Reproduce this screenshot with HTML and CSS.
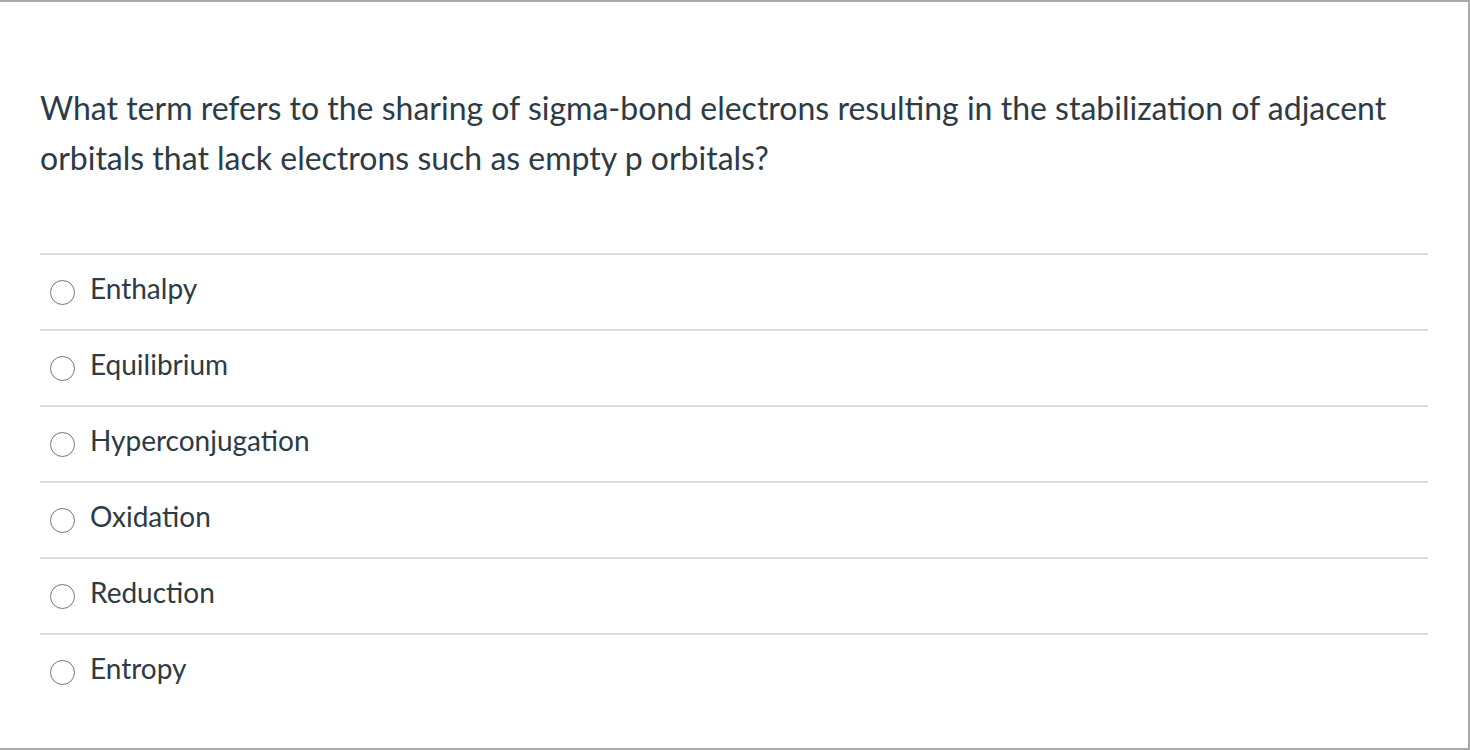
FILE: index.html
```html
<!DOCTYPE html>
<html lang="en">
<head>
<meta charset="utf-8">
<title>Quiz question</title>
<link rel="stylesheet" href="styles.css">
</head>
<body>
<div class="frame">
  <div class="question">
    <p class="question-text">What term refers to the sharing of sigma-bond electrons resulting in the stabilization of adjacent orbitals that lack electrons such as empty p orbitals?</p>
    <div class="answers">
      <label class="answer"><span class="radio"></span><span class="answer-text">Enthalpy</span></label>
      <label class="answer"><span class="radio"></span><span class="answer-text">Equilibrium</span></label>
      <label class="answer"><span class="radio"></span><span class="answer-text">Hyperconjugation</span></label>
      <label class="answer"><span class="radio"></span><span class="answer-text">Oxidation</span></label>
      <label class="answer"><span class="radio"></span><span class="answer-text">Reduction</span></label>
      <label class="answer"><span class="radio"></span><span class="answer-text">Entropy</span></label>
    </div>
  </div>
</div>
</body>
</html>
```

FILE: styles.css
```css
* {
  box-sizing: border-box;
}

html, body {
  margin: 0;
  padding: 0;
  background: #ffffff;
}

body {
  font-family: Lato, "Liberation Sans", sans-serif;
  color: #2d3b45;
}

.frame {
  width: 1470px;
  height: 750px;
  border-top: 2px solid #a9a9a9;
  border-right: 2px solid #a9a9a9;
  border-bottom: 2px solid #a9a9a9;
  background: #ffffff;
}

.question {
  padding: 81px 40px 0 40px;
}

.question-text {
  margin: 0;
  font-size: 32px;
  line-height: 50px;
}

.answers {
  margin-top: 70px;
  display: flex;
  flex-direction: column;
}

.answer {
  display: flex;
  align-items: center;
  height: 76px;
  border-top: 2px solid #dcdcdc;
  padding-left: 10px;
  gap: 15px;
}

.radio {
  width: 25px;
  height: 25px;
  border: 1.75px solid #767676;
  border-radius: 50%;
  flex: none;
}

.answer-text {
  font-size: 28px;
  line-height: 34px;
  margin-bottom: 8px;
}
```
